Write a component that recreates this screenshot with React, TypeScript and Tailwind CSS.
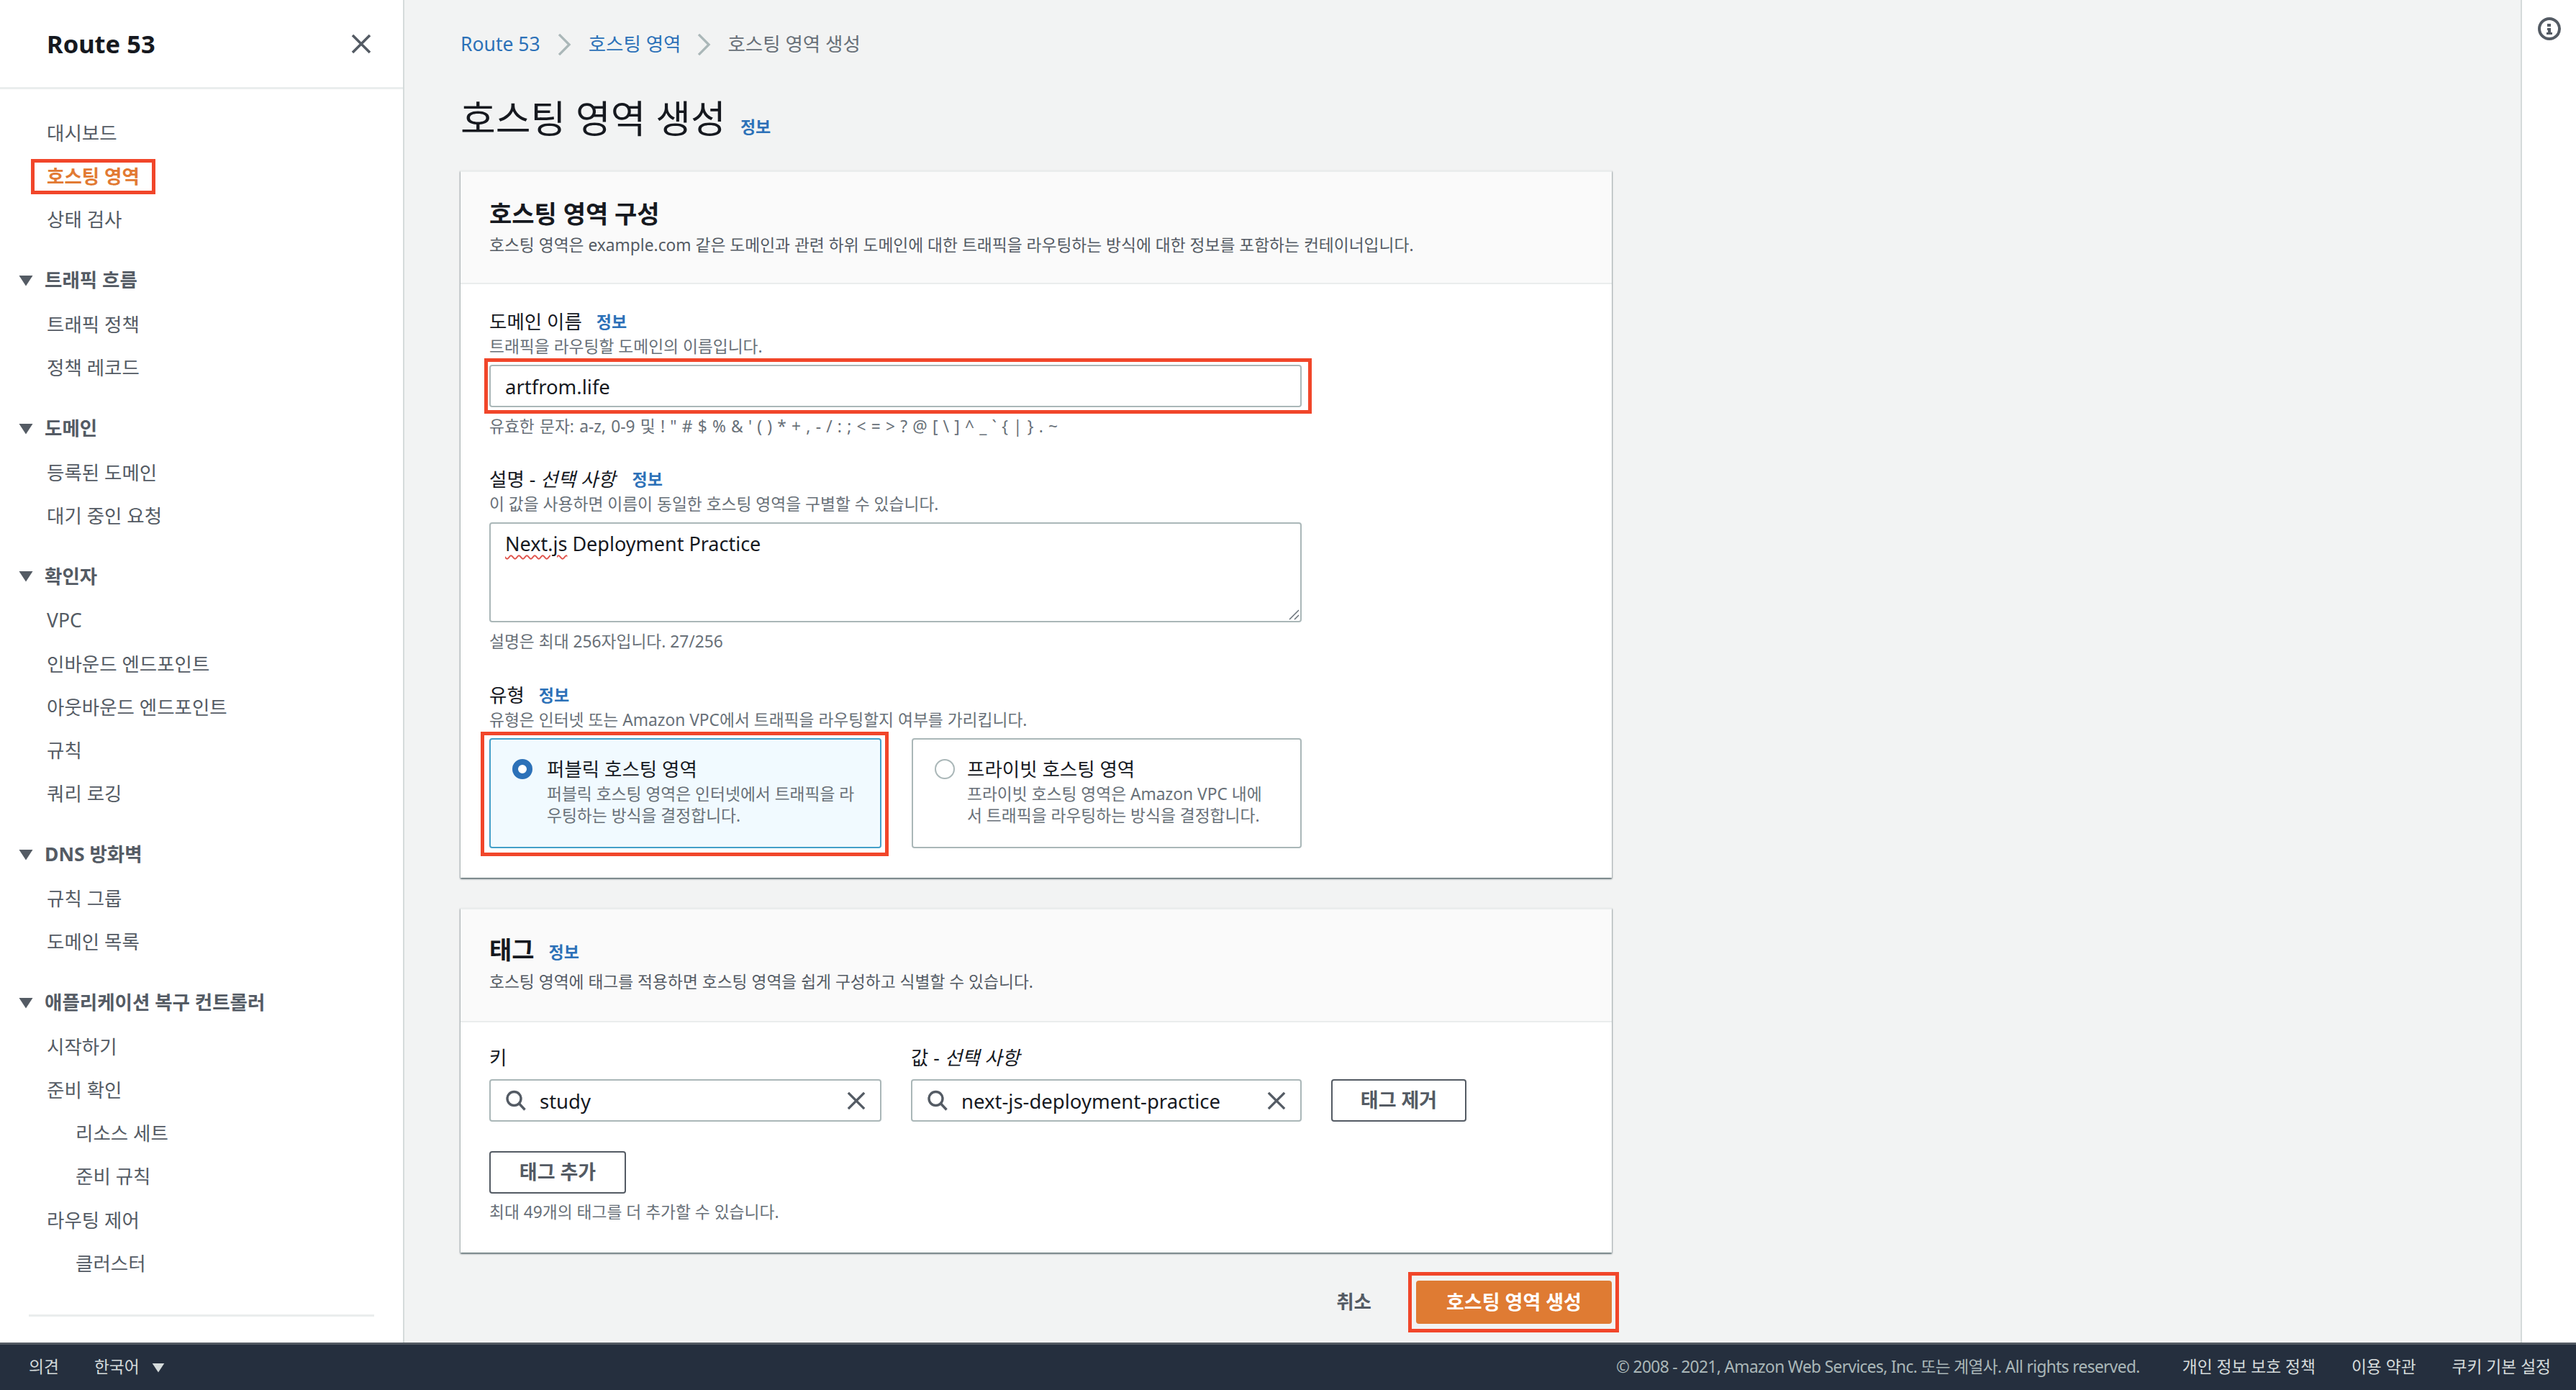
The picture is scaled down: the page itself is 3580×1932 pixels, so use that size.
const FONT = 'font-["Noto_Sans","Noto_Sans_CJK_KR",sans-serif]';

type NavItem = { label: string; sub?: boolean; active?: boolean };
type NavGroup = { title?: string; items: NavItem[] };

const navGroups: NavGroup[] = [
  { items: [{ label: '대시보드' }, { label: '호스팅 영역', active: true }, { label: '상태 검사' }] },
  { title: '트래픽 흐름', items: [{ label: '트래픽 정책' }, { label: '정책 레코드' }] },
  { title: '도메인', items: [{ label: '등록된 도메인' }, { label: '대기 중인 요청' }] },
  {
    title: '확인자',
    items: [
      { label: 'VPC' },
      { label: '인바운드 엔드포인트' },
      { label: '아웃바운드 엔드포인트' },
      { label: '규칙' },
      { label: '쿼리 로깅' },
    ],
  },
  { title: 'DNS 방화벽', items: [{ label: '규칙 그룹' }, { label: '도메인 목록' }] },
  {
    title: '애플리케이션 복구 컨트롤러',
    items: [
      { label: '시작하기' },
      { label: '준비 확인' },
      { label: '리소스 세트', sub: true },
      { label: '준비 규칙', sub: true },
      { label: '라우팅 제어' },
      { label: '클러스터', sub: true },
    ],
  },
];

const Triangle = ({ className }: { className: string }) => (
  <svg viewBox="0 0 20 16" className={className}>
    <path d="M0.5 1h19L10 15.5z" fill="currentColor" />
  </svg>
);

const Close = ({ className }: { className: string }) => (
  <svg viewBox="0 0 28 28" className={className} fill="none" stroke="currentColor" strokeWidth="3.6">
    <path d="M2 2l24 24M26 2L2 26" />
  </svg>
);

const Search = () => (
  <svg viewBox="0 0 30 30" className="w-[30px] h-[30px] text-[#545b64] shrink-0" fill="none" stroke="currentColor" strokeWidth="3.4">
    <circle cx="12.5" cy="12" r="9.5" />
    <path d="M19.5 19l8 8.5" />
  </svg>
);

const Chevron = () => (
  <svg viewBox="0 0 20 32" className="w-[19px] h-[30px] text-[#aab7b8] shrink-0" fill="none" stroke="currentColor" strokeWidth="3.5">
    <path d="M2 1l15 15L2 31" />
  </svg>
);

const Info = ({ className = 'ml-[20px]' }: { className?: string }) => (
  <span className={`${className} text-[#2c71b8] text-[23px] font-semibold`}>정보</span>
);

const RedFrame = ({ className }: { className: string }) => (
  <div className={`absolute border-[5px] border-[#f1462a] pointer-events-none ${className}`} />
);

function Sidebar() {
  return (
    <aside className="w-[562px] shrink-0 bg-white border-r-2 border-[#d5dbdb] flex flex-col">
      <div className="h-[124px] shrink-0 border-b-[3px] border-[#eaeded] pl-[65px] pr-[44px] flex items-center justify-between">
        <span className="text-[34.5px] font-bold text-[#16191f]">Route 53</span>
        <Close className="w-[28px] h-[28px] text-[#545b64]" />
      </div>
      <nav className="pt-[30px] flex-1 text-[26.5px] text-[#545b64]">
        {navGroups.map((group, i) => (
          <div key={i} className={group.title ? 'mt-[25px]' : ''}>
            {group.title && (
              <div className="h-[60.25px] flex items-center pl-[26px] font-bold">
                <Triangle className="w-[20px] h-[16px] mr-[16px]" />
                {group.title}
              </div>
            )}
            {group.items.map((item) => (
              <div
                key={item.label}
                className={`relative h-[60.25px] pt-[3px] flex items-center ${item.sub ? 'pl-[105px]' : 'pl-[65px]'} ${
                  item.active ? 'text-[#e27a33] font-bold' : ''
                }`}
              >
                {item.label}
                {item.active && <RedFrame className="left-[43px] top-[7px] w-[173px] h-[49px]" />}
              </div>
            ))}
          </div>
        ))}
        <div className="h-px border-t-[3px] border-[#eaeded] mx-[40px] mt-[42px]" />
      </nav>
    </aside>
  );
}

const Label = ({ children, info = true }: { children: React.ReactNode; info?: boolean }) => (
  <div className="h-[36px] pt-[3px] flex items-center text-[26.5px] text-[#16191f]">
    {children}
    {info && <Info />}
  </div>
);

const Hint = ({ children }: { children: React.ReactNode }) => (
  <div className="h-[36px] leading-[36px] text-[22.75px] text-[#687078]">{children}</div>
);

function RadioCard({ selected, title, lines }: { selected?: boolean; title: string; lines: string[] }) {
  return (
    <div
      className={`h-[153px] rounded-[4px] border-2 flex pl-[30px] pt-[26px] ${
        selected ? 'bg-[#f1faff] border-[#44a0c9]' : 'bg-white border-[#aab7b8]'
      }`}
    >
      {selected ? (
        <div className="w-[28px] h-[28px] rounded-full border-[8px] border-[#2c71b8] bg-white shrink-0 mt-[1px]" />
      ) : (
        <div className="w-[28px] h-[28px] rounded-full border-2 border-[#aab7b8] bg-white shrink-0 mt-[1px]" />
      )}
      <div className={selected ? 'ml-[20px]' : 'ml-[17px]'}>
        <div className="h-[30px] leading-[30px] text-[26.5px] text-[#16191f]">{title}</div>
        <div className="mt-[5px] text-[22.75px] leading-[30px] text-[#687078]">
          {lines.map((l) => (
            <div key={l} className="whitespace-nowrap">{l}</div>
          ))}
        </div>
      </div>
    </div>
  );
}

function TagInput({ value }: { value: string }) {
  return (
    <div className="h-[59px] rounded-[4px] border-2 border-[#aab7b8] bg-white flex items-center pl-[20px] pr-[20px]">
      <Search />
      <span className="ml-[18px] flex-1 pt-[2px] text-[27.5px] text-[#16191f]">{value}</span>
      <Close className="w-[26px] h-[26px] text-[#545b64]" />
    </div>
  );
}

const OutlineButton = ({ children, className = '' }: { children: React.ReactNode; className?: string }) => (
  <button className={`h-[59px] rounded-[4px] border-2 border-[#545b64] bg-white text-[27px] font-bold text-[#545b64] ${className}`}>
    {children}
  </button>
);

const cardClass =
  'bg-white border-t-2 border-[#eaeded] shadow-[0_2px_2px_0_rgba(0,28,36,0.45),1px_1px_2px_0_rgba(0,28,36,0.2),-1px_1px_2px_0_rgba(0,28,36,0.2)]';

function Main() {
  return (
    <main className="flex-1 bg-[#f2f3f3] pl-[78px] pt-[44px]">
      <div className="w-[1600px]">
        <div className="h-[36px] flex items-center text-[26.5px]">
          <span className="text-[#2c71b8]">Route 53</span>
          <span className="mx-[24px]"><Chevron /></span>
          <span className="text-[#2c71b8]">호스팅 영역</span>
          <span className="mx-[23px]"><Chevron /></span>
          <span className="text-[#687078]">호스팅 영역 생성</span>
        </div>
        <div className="mt-[50px] h-[70px] flex items-center">
          <h1 className="text-[53px] font-normal text-[#16191f]">호스팅 영역 생성</h1>
          <Info className="ml-[20px] mt-[22px]" />
        </div>

        <section className={`mt-[37px] ${cardClass}`}>
          <div className="h-[156px] bg-[#fafafa] border-b-2 border-[#eaeded] px-[40px] pt-[36px]">
            <h2 className="h-[44px] leading-[44px] text-[34px] font-bold text-[#16191f]">호스팅 영역 구성</h2>
            <p className="mt-[4px] h-[36px] leading-[36px] text-[22.75px] text-[#545b64]">
              호스팅 영역은 example.com 같은 도메인과 관련 하위 도메인에 대한 트래픽을 라우팅하는 방식에 대한 정보를 포함하는 컨테이너입니다.
            </p>
          </div>
          <div className="px-[40px] pt-[33px] pb-[41px]">
            <Label>도메인 이름</Label>
            <Hint>트래픽을 라우팅할 도메인의 이름입니다.</Hint>
            <div className="relative mt-[7px] w-[1129px] h-[59px] rounded-[4px] border-2 border-[#aab7b8] bg-white flex items-center pl-[20px] pt-[2px] text-[27.5px] text-[#16191f]">
              artfrom.life
              <RedFrame className="-left-[9px] -right-[16px] -top-[11px] -bottom-[11px]" />
            </div>
            <div className="mt-[9px] [word-spacing:1.3px]">
              <Hint>유효한 문자: a-z, 0-9 및 ! " # $ % &amp; ' ( ) * + , - / : ; &lt; = &gt; ? @ [ \ ] ^ _ ` {'{'} | {'}'} . ~</Hint>
            </div>

            <div className="mt-[36px]">
              <Label>
                설명 -&nbsp;<em className="italic mr-[3px]">선택 사항</em>
              </Label>
            </div>
            <Hint>이 값을 사용하면 이름이 동일한 호스팅 영역을 구별할 수 있습니다.</Hint>
            <div className="relative mt-[7px] w-[1129px] h-[139px] rounded-[4px] border-2 border-[#aab7b8] bg-white pl-[20px] pt-[9px] text-[27px] leading-[38px] text-[#16191f]">
              <span className="underline decoration-wavy decoration-[#e0524a] decoration-2 underline-offset-[5px]">Next.js</span> Deployment Practice
              <svg viewBox="0 0 16 16" className="absolute right-[1px] bottom-[1px] w-[16px] h-[16px] text-[#687078]" fill="none" stroke="currentColor" strokeWidth="1.5">
                <path d="M2 15L15 2M9 15l6-6" />
              </svg>
            </div>
            <div className="mt-[9px]">
              <Hint>설명은 최대 256자입니다. 27/256</Hint>
            </div>

            <div className="mt-[37px]">
              <Label>유형</Label>
            </div>
            <Hint>유형은 인터넷 또는 Amazon VPC에서 트래픽을 라우팅할지 여부를 가리킵니다.</Hint>
            <div className="mt-[7px] grid grid-cols-[545px_542px] gap-x-[42px]">
              <div className="relative">
                <RadioCard
                  selected
                  title="퍼블릭 호스팅 영역"
                  lines={['퍼블릭 호스팅 영역은 인터넷에서 트래픽을 라', '우팅하는 방식을 결정합니다.']}
                />
                <RedFrame className="-left-[12px] -right-[10px] -top-[9px] -bottom-[11px]" />
              </div>
              <RadioCard
                title="프라이빗 호스팅 영역"
                lines={['프라이빗 호스팅 영역은 Amazon VPC 내에', '서 트래픽을 라우팅하는 방식을 결정합니다.']}
              />
            </div>
          </div>
        </section>

        <section className={`mt-[42px] ${cardClass}`}>
          <div className="h-[157px] bg-[#fafafa] border-b-2 border-[#eaeded] px-[40px] pt-[34px]">
            <div className="h-[44px] flex items-center">
              <h2 className="text-[34px] font-bold text-[#16191f]">태그</h2>
              <Info className="ml-[20px] mt-[6px]" />
            </div>
            <p className="mt-[5px] h-[36px] leading-[36px] text-[22.75px] text-[#545b64]">
              호스팅 영역에 태그를 적용하면 호스팅 영역을 쉽게 구성하고 식별할 수 있습니다.
            </p>
          </div>
          <div className="px-[40px] pt-[30px] pb-[38px]">
            <div className="grid grid-cols-[545px_543px_188px] gap-x-[41px]">
              <Label info={false}>키</Label>
              <Label info={false}>
                값 -&nbsp;<em className="italic">선택 사항</em>
              </Label>
              <div />
            </div>
            <div className="mt-[13px] grid grid-cols-[545px_543px_188px] gap-x-[41px]">
              <TagInput value="study" />
              <TagInput value="next-js-deployment-practice" />
              <OutlineButton>태그 제거</OutlineButton>
            </div>
            <OutlineButton className="mt-[41px] w-[190px] block">태그 추가</OutlineButton>
            <div className="mt-[8px]">
              <Hint>최대 49개의 태그를 더 추가할 수 있습니다.</Hint>
            </div>
          </div>
        </section>

        <div className="mt-[39px] flex items-center justify-end">
          <span className="text-[26.5px] font-bold text-[#545b64] mr-[62px]">취소</span>
          <div className="relative">
            <button className="w-[272px] h-[60px] rounded-[4px] bg-[#df7b33] text-white text-[27px] font-bold">
              호스팅 영역 생성
            </button>
            <RedFrame className="-left-[11px] -right-[10px] -top-[12px] -bottom-[12px]" />
          </div>
        </div>
      </div>
    </main>
  );
}

function Footer() {
  return (
    <footer className="h-[66px] shrink-0 bg-[#252f3e] border-t-[3px] border-[#545b64] flex items-center pl-[40px] pr-[35px] text-[22.75px] text-[#d5dbdb]">
      <span>의견</span>
      <span className="ml-[49px]">한국어</span>
      <Triangle className="ml-[17px] w-[18px] h-[14px]" />
      <span className="ml-auto tracking-[-0.65px] text-[#aab7b8]">© 2008 - 2021, Amazon Web Services, Inc. 또는 계열사. All rights reserved.</span>
      <span className="ml-[59px]">개인 정보 보호 정책</span>
      <span className="ml-[50px]">이용 약관</span>
      <span className="ml-[50px]">쿠키 기본 설정</span>
    </footer>
  );
}

export default function App() {
  return (
    <div className={`w-[3580px] h-[1932px] flex flex-col overflow-hidden ${FONT}`}>
      <div className="flex-1 flex min-h-0">
        <Sidebar />
        <Main />
        <aside className="w-[77px] shrink-0 bg-white border-l-2 border-[#d5dbdb] flex justify-center pt-[24px]">
          <svg viewBox="0 0 32 32" className="w-[32px] h-[32px] text-[#545b64]" fill="none" stroke="currentColor">
            <circle cx="16" cy="16" r="14" strokeWidth="4" />
            <path d="M13 9h5v4h-5zM13 15h5v6h2v3h-8v-3h2v-3h-1z" fill="currentColor" stroke="none" />
          </svg>
        </aside>
      </div>
      <Footer />
    </div>
  );
}
